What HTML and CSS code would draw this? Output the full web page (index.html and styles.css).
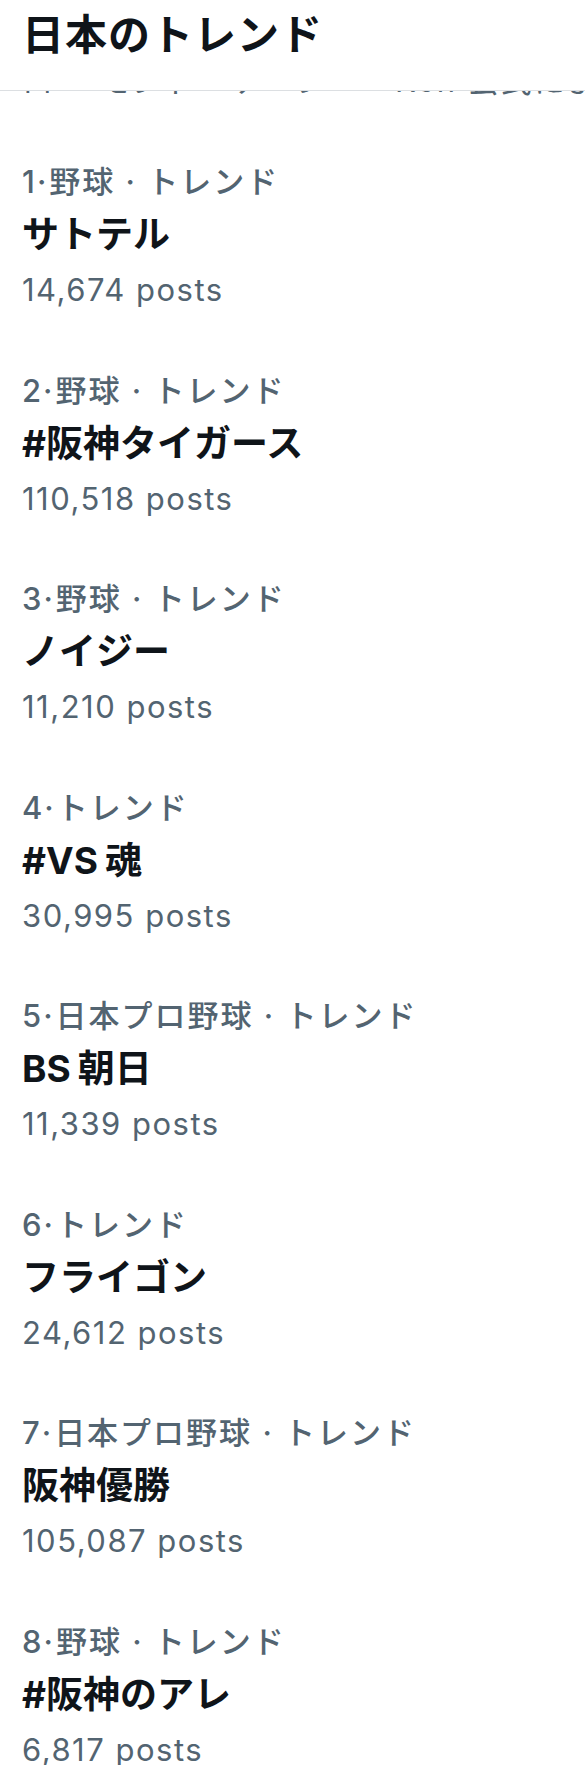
FILE: index.html
```html
<!DOCTYPE html>
<html lang="ja">
<head>
<meta charset="utf-8">
<link rel="stylesheet" href="styles.css">
</head>
<body>
<div class="page">
  <header class="header">
    <h1 class="header-title">日本のトレンド</h1>
  </header>
  <div class="peek"><span class="peek-text">ロ ーモンド・ケーシー・Ken 公式による</span></div>
  <ul class="trends">
    <li class="trend">
      <div class="meta">1<span class="dot">·</span>野球 · トレンド</div>
      <div class="name">サトテル</div>
      <div class="count">14,674 posts</div>
    </li>
    <li class="trend">
      <div class="meta">2<span class="dot">·</span>野球 · トレンド</div>
      <div class="name">#阪神タイガース</div>
      <div class="count">110,518 posts</div>
    </li>
    <li class="trend">
      <div class="meta">3<span class="dot">·</span>野球 · トレンド</div>
      <div class="name">ノイジー</div>
      <div class="count">11,210 posts</div>
    </li>
    <li class="trend">
      <div class="meta">4<span class="dot">·</span>トレンド</div>
      <div class="name">#VS<span class="gap">魂</span></div>
      <div class="count">30,995 posts</div>
    </li>
    <li class="trend">
      <div class="meta">5<span class="dot">·</span>日本プロ野球 · トレンド</div>
      <div class="name">BS<span class="gap">朝日</span></div>
      <div class="count">11,339 posts</div>
    </li>
    <li class="trend">
      <div class="meta">6<span class="dot">·</span>トレンド</div>
      <div class="name">フライゴン</div>
      <div class="count">24,612 posts</div>
    </li>
    <li class="trend">
      <div class="meta">7<span class="dot">·</span>日本プロ野球 · トレンド</div>
      <div class="name">阪神優勝</div>
      <div class="count">105,087 posts</div>
    </li>
    <li class="trend">
      <div class="meta">8<span class="dot">·</span>野球 · トレンド</div>
      <div class="name">#阪神のアレ</div>
      <div class="count">6,817 posts</div>
    </li>
  </ul>
</div>
</body>
</html>
```

FILE: styles.css
```css
* { box-sizing: border-box; }
html, body { margin: 0; padding: 0; background: #ffffff; }
body {
  font-family: "Inter", "Noto Sans CJK JP", sans-serif;
  color: #0f1419;
  overflow: hidden;
}
.page {
  width: 585px;
  height: 1765px;
  overflow: hidden;
}
.header {
  height: 91px;
  border-bottom: 1px solid #dcdfe2;
  padding: 0 22px;
  display: flex;
  align-items: flex-start;
}
.header-title {
  margin: 0;
  font-size: 42px;
  line-height: 64px;
  font-weight: 700;
  letter-spacing: 1px;
  font-family: "Noto Sans CJK JP", sans-serif;
}
.peek {
  height: 7px;
  overflow: hidden;
  display: flex;
  align-items: flex-end;
  padding: 0 22px;
}
.peek-text {
  display: block;
  white-space: nowrap;
  font-size: 31px;
  line-height: 30px;
  letter-spacing: 2px;
  color: #536471;
  margin-bottom: 2px;
}
.trends {
  list-style: none;
  margin: 0;
  padding: 0;
  margin-top: 36px;
}
.trend {
  padding: 26px 22px 26.5px 22px;
  display: flex;
  flex-direction: column;
}
.meta {
  font-size: 31px;
  line-height: 44px;
  letter-spacing: 2px;
  color: #536471;
  font-weight: 500;
  white-space: nowrap;
}
.dot { margin: 0 1px 0 0; }
.name {
  font-size: 37px;
  line-height: 62px;
  font-weight: 700;
  white-space: nowrap;
}
.gap { margin-left: 7px; }
.count {
  font-size: 31px;
  line-height: 48px;
  margin-bottom: 2px;
  letter-spacing: 1.5px;
  color: #536471;
  white-space: nowrap;
}
```
